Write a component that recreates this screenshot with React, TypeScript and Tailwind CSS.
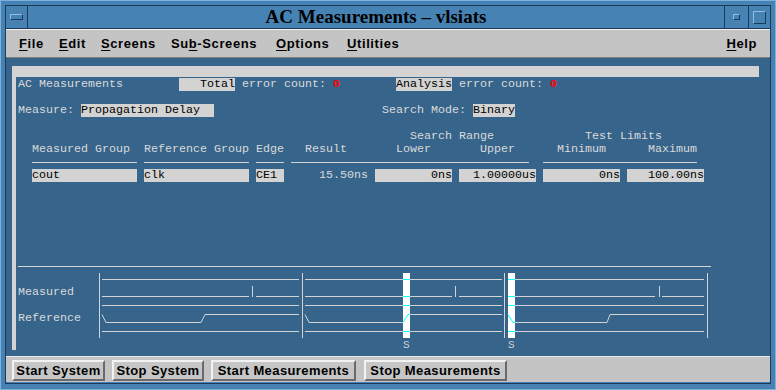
import React from 'react';

const G = '#d3d3d3';
const C = '#00ffff';

function MenuItem({ first, rest, pre = '', className = '' }: { first: string; rest: string; pre?: string; className?: string }) {
  return (
    <span className={className}>
      {pre}
      <span className="underline underline-offset-2">{first}</span>
      {rest}
    </span>
  );
}

function Waveform() {
  const gray = [
    // segment 1
    'M6 12.5H203 M6 29.5H153 M160 29.5H203 M6 38.5H203 M6 64.5H203 M156.5 19V30',
    'M6 47.5 L10 55.5 H105 L109 47.5 H203',
    // segment 2
    'M209 12.5H406 M209 29.5H356 M363 29.5H406 M209 38.5H406 M209 64.5H406 M359.5 19V30',
    'M209 47.5 L213 55.5 H307 M314 47.5 H406',
    // segment 3
    'M412 12.5H608 M412 29.5H559 M566 29.5H608 M412 38.5H608 M412 64.5H608 M563.5 19V30',
    'M419 55.5 H511 L514 47.5 H608',
    // separators
    'M3.5 6V71 M206.5 6V71 M408.5 6V71 M611.5 6V71',
  ];
  return (
    <svg width="620" height="84" viewBox="0 0 620 84" className="block">
      {gray.map((d, i) => (
        <path key={i} d={d} stroke={G} strokeWidth="1" fill="none" />
      ))}
      <rect x="307" y="6" width="7" height="65" fill="#ffffff" />
      <rect x="412" y="6" width="7" height="65" fill="#ffffff" />
      <path
        d="M307 12.5H314 M307 29.5H314 M307 38.5H314 M307 64.5H314 M307 55.5 L312 47.5 H314 M412 12.5H419 M412 29.5H419 M412 38.5H419 M412 64.5H419 M412 47.5 L417 55.5 H419"
        stroke={C}
        strokeWidth="1"
        fill="none"
      />
      <text x="307" y="81" fontFamily="Liberation Mono, monospace" fontSize="11" fill={G}>S</text>
      <text x="412" y="81" fontFamily="Liberation Mono, monospace" fontSize="11" fill={G}>S</text>
    </svg>
  );
}

export default function App() {
  const btn =
    'h-[21px] border-2 border-t-[#f2f2f2] border-l-[#f2f2f2] border-b-[#6a6a6a] border-r-[#6a6a6a] bg-[#c6c6c6] text-[13px] font-bold tracking-[0.4px] text-black leading-none flex items-center justify-center';
  const field = 'h-[13px] bg-[#d3d3d3] text-black';

  return (
    <div className="w-[776px] h-[390px] bg-[#4682b4] border border-[#7fb1de] pt-[4px] px-[4px] pb-[5px]">
      <div className="w-[766px] h-[379px] flex flex-col border border-[#1d3a57]">
        {/* title bar */}
        <div className="h-[23px] flex border-b border-[#1d3a57] bg-[#4682b4]">
          <div className="w-[22px] border-r border-[#1d3a57] flex items-center justify-center">
            <div className="w-[13px] h-[6px] border border-t-[#8fbde6] border-l-[#8fbde6] border-b-[#1d3a57] border-r-[#1d3a57]" />
          </div>
          <div className="flex-1 text-center font-['Liberation_Serif',serif] font-bold text-[19px] leading-[22px] text-black">
            AC Measurements – vlsiats
          </div>
          <div className="w-[24px] border-l border-[#1d3a57] flex items-center justify-center">
            <div className="w-[7px] h-[6px] border border-t-[#8fbde6] border-l-[#8fbde6] border-b-[#1d3a57] border-r-[#1d3a57]" />
          </div>
          <div className="w-[22px] border-l border-[#1d3a57] flex items-center justify-center">
            <div className="w-[13px] h-[13px] border border-t-[#8fbde6] border-l-[#8fbde6] border-b-[#1d3a57] border-r-[#1d3a57]" />
          </div>
        </div>

        {/* menu bar */}
        <div className="h-[29px] flex items-center bg-[#c4c4c4] border-t border-[#f0f0f0] border-b border-b-[#7c7c7c] font-['Liberation_Sans',Arial,sans-serif] font-bold text-[13px] tracking-[0.6px] text-black pl-[13px] pr-[13px]">
          <MenuItem first="F" rest="ile" className="w-[40px]" />
          <MenuItem first="E" rest="dit" className="w-[42px]" />
          <MenuItem first="S" rest="creens" className="w-[70px]" />
          <MenuItem pre="Su" first="b" rest="-Screens" className="w-[105px]" />
          <MenuItem first="O" rest="ptions" className="w-[71px]" />
          <MenuItem first="U" rest="tilities" />
          <MenuItem first="H" rest="elp" className="ml-auto" />
        </div>

        {/* main content */}
        <div className="h-[298px] bg-[#36648b] pt-[8px] pl-[6px]">
          <div className="w-[747px] h-[284px] border-l-4 border-t-[11px] border-[#d3d3d3] pl-[2px] pt-[1px] font-['Liberation_Mono',monospace] text-[11.67px] leading-[13px] text-[#dadada] whitespace-pre">
            <div className="flex h-[13px]">
              <span className="w-[161px]">AC Measurements</span>
              <span className={`${field} w-[56px] text-right`}>Total</span>
              <span> error count: </span>
              <span className="text-[#ff0000] font-bold">0</span>
              <span className={`${field} w-[56px] ml-[56px]`}>Analysis</span>
              <span> error count: </span>
              <span className="text-[#ff0000] font-bold">0</span>
            </div>

            <div className="flex h-[13px] mt-[13px]">
              <span>Measure: </span>
              <span className={`${field} w-[133px]`}>Propagation Delay</span>
              <span className="ml-[168px]">Search Mode: </span>
              <span className={`${field} w-[42px]`}>Binary</span>
            </div>

            <div className="flex h-[13px] mt-[13px] ml-[14px] gap-[7px]">
              <span className="w-[105px]" />
              <span className="w-[105px]" />
              <span className="w-[28px]" />
              <span className="w-[77px]" />
              <span className="w-[161px] pl-[35px]">Search Range</span>
              <span className="w-[161px] pl-[42px]">Test Limits</span>
            </div>
            <div className="flex h-[13px] ml-[14px] gap-[7px]">
              <span className="w-[105px]">Measured Group</span>
              <span className="w-[105px]">Reference Group</span>
              <span className="w-[28px]">Edge</span>
              <span className="w-[77px] pl-[14px]">Result</span>
              <span className="w-[77px] text-center">Lower</span>
              <span className="w-[77px] text-center">Upper</span>
              <span className="w-[77px] text-center">Minimum</span>
              <span className="w-[77px] text-right pr-[7px]">Maximum</span>
            </div>
            <div className="flex mt-[6px] ml-[14px] gap-[7px]">
              <div className="w-[105px] h-px bg-[#d3d3d3]" />
              <div className="w-[105px] h-px bg-[#d3d3d3]" />
              <div className="w-[28px] h-px bg-[#d3d3d3]" />
              <div className="w-[238px] h-px bg-[#d3d3d3]" />
              <div className="w-[154px] h-px bg-[#d3d3d3] ml-[7px]" />
            </div>
            <div className="flex mt-[6px] ml-[14px] gap-[7px]">
              <span className={`${field} w-[105px]`}>cout</span>
              <span className={`${field} w-[105px]`}>clk</span>
              <span className={`${field} w-[28px]`}>CE1</span>
              <span className="w-[77px] h-[13px] text-right">15.50ns</span>
              <span className={`${field} w-[77px] text-right`}>0ns</span>
              <span className={`${field} w-[77px] text-right`}>1.00000us</span>
              <span className={`${field} w-[77px] text-right`}>0ns</span>
              <span className={`${field} w-[77px] text-right`}>100.00ns</span>
            </div>

            <div className="mt-[84px] w-[693px] h-px bg-[#d3d3d3]" />
            <div className="flex">
              <div className="w-[78px] flex flex-col">
                <span className="mt-[19px] h-[13px]">Measured</span>
                <span className="mt-[13px] h-[13px]">Reference</span>
              </div>
              <Waveform />
            </div>
          </div>
        </div>

        {/* button bar */}
        <div className="h-[26px] bg-[#c4c4c4] border-t border-[#e8e8e8] flex items-start pt-[3px] pl-[6px] gap-[7px] font-['Liberation_Sans',Arial,sans-serif]">
          <button className={`${btn} w-[93px]`}>Start System</button>
          <button className={`${btn} w-[92px]`}>Stop System</button>
          <button className={`${btn} w-[145px]`}>Start Measurements</button>
          <button className={`${btn} w-[143px] ml-[1px]`}>Stop Measurements</button>
        </div>
      </div>
    </div>
  );
}
